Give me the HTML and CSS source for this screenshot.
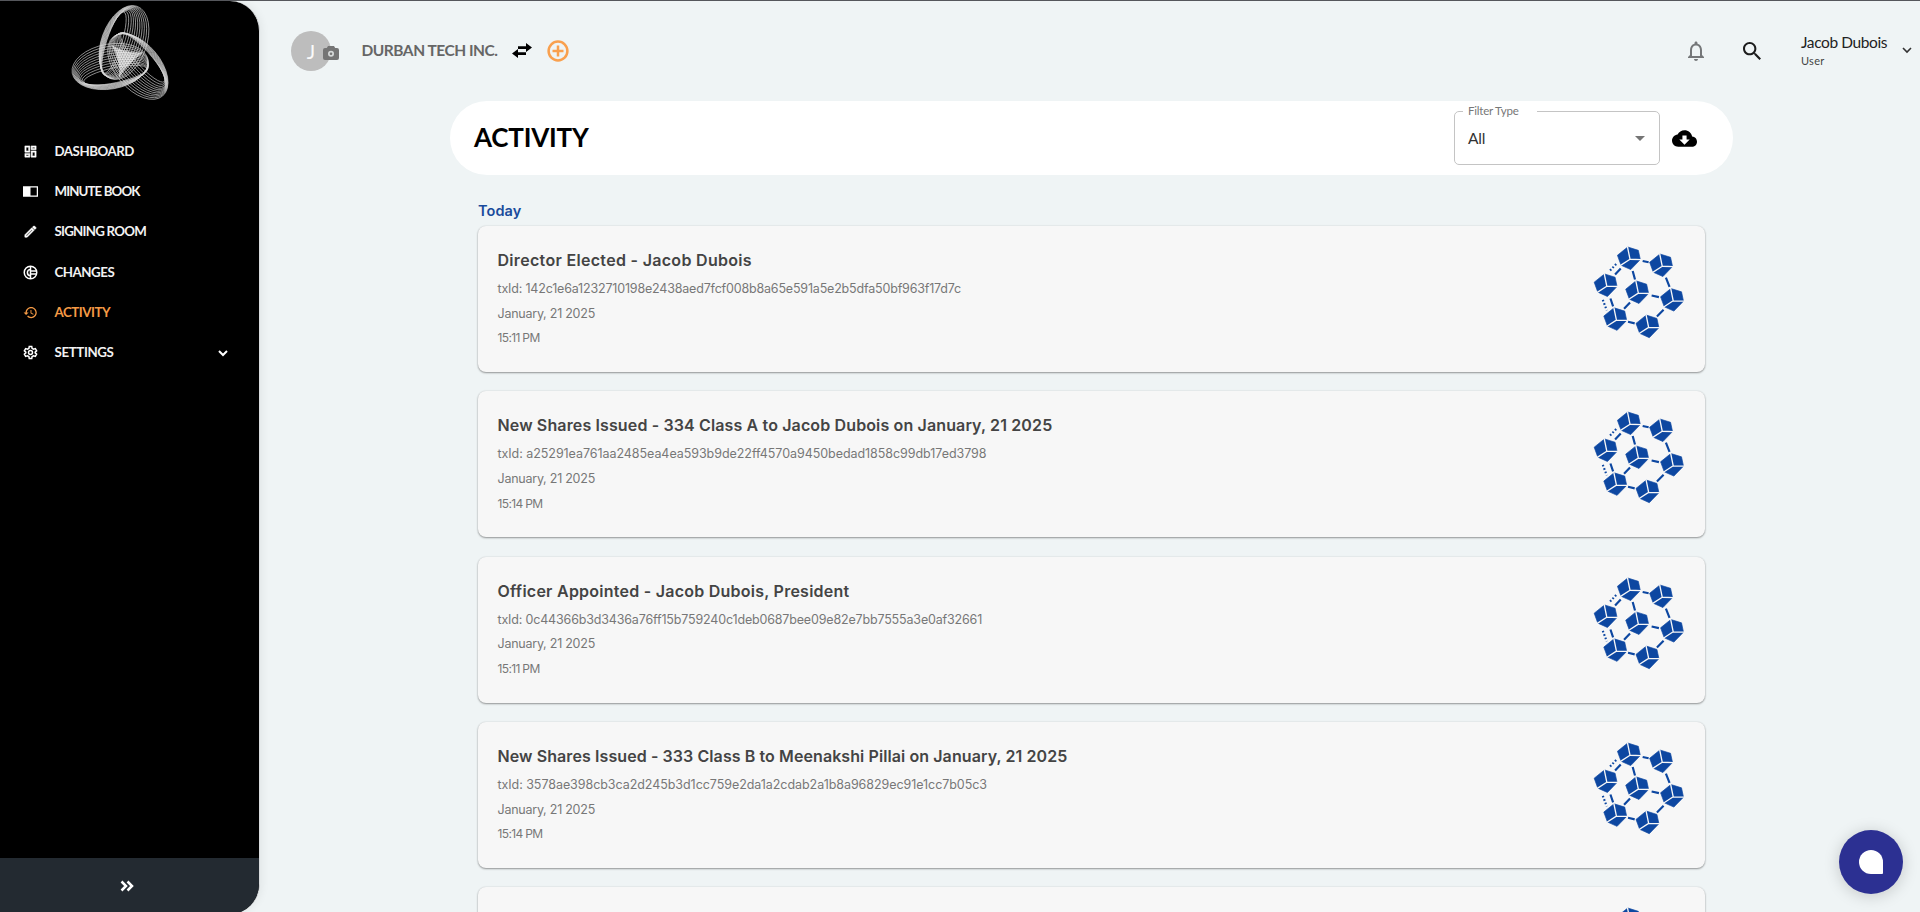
FILE: index.html
```html
<!DOCTYPE html>
<html lang="en">
<head>
<meta charset="utf-8">
<title>Activity</title>
<link rel="stylesheet" href="styles.css">
</head>
<body>
<svg class="defs" aria-hidden="true">
  <symbol id="chain" viewBox="100 78 272 280">
    <g stroke="#0d47a1" stroke-width="6.500" fill="none">
      <path d="M247 123l18 4M317 173l11 28M181 146l-17 18M217 153l7 26M150 236l8 24M209 248l-18 19M274 227l22 5M203 306l20 5M310 270l-20 20"/>
      <path d="M149 152l22-24M127 240l12 32" stroke-dasharray="5 6"/>
    </g>
    <g id="cubes">
      <use href="#cube" x="206" y="115"/><use href="#cube" x="303" y="136"/>
      <use href="#cube" x="136" y="196"/><use href="#cube" x="231" y="217"/>
      <use href="#cube" x="336" y="240"/><use href="#cube" x="165" y="298"/>
      <use href="#cube" x="262" y="320"/>
    </g>
  </symbol>
  <g id="cube">
    <path d="M-4-34L28-24L34 4L5 34L-24 21L-35-9Z" fill="#0d47a1" stroke="#0d47a1" stroke-width="2"/>
    <path d="M3 3L-5-36M3 3L37 4M3 3L-28 23" stroke="#f7f7f7" stroke-width="4" fill="none"/>
  </g>
</svg>
<div class="app">
  <aside class="sidebar">
    <svg class="logo" viewBox="0 0 260 120">
      <defs>
        <g id="lobe">
          <ellipse cx="122" cy="41" rx="22.5" ry="38.5" transform="rotate(20 122 41)"/>
          <ellipse cx="121" cy="41" rx="21" ry="38" transform="rotate(20 121 41)"/>
          <ellipse cx="120" cy="41" rx="19.5" ry="37.5" transform="rotate(20 120 41)"/>
          <ellipse cx="119" cy="41" rx="18" ry="37" transform="rotate(20 119 41)"/>
          <ellipse cx="118" cy="41" rx="16.5" ry="36.5" transform="rotate(20 118 41)"/>
          <ellipse cx="117" cy="41" rx="15" ry="36" transform="rotate(20 117 41)"/>
          <ellipse cx="116" cy="41" rx="13.5" ry="35.5" transform="rotate(20 116 41)"/>
          <ellipse cx="115" cy="41" rx="12" ry="35" transform="rotate(20 115 41)"/>
          <ellipse cx="114" cy="41" rx="10.5" ry="34" transform="rotate(20 114 41)"/>
          <ellipse cx="113" cy="41" rx="9" ry="33" transform="rotate(19 113 41)"/>
          <ellipse cx="112" cy="41" rx="7.5" ry="32" transform="rotate(18 112 41)"/>
        </g>
      </defs>
      <g transform="translate(2 1.500)">
        <path d="M109 43Q122 52 141 51Q127 61 117 76Q119 58 109 43Z" fill="#fff" opacity=".6"/>
        <g fill="none" stroke="#fff" stroke-width=".6" opacity=".85">
          <use href="#lobe"/>
          <use href="#lobe" transform="rotate(120 122 57)"/>
          <use href="#lobe" transform="rotate(240 122 57)"/>
        </g>
      </g>
    </svg>
    <nav class="nav">
      <a class="nav-item"><svg viewBox="0 0 24 24"><path stroke="#fff" stroke-width=".8" d="M19 5v2h-4V5h4M9 5v6H5V5h4m10 8v6h-4v-6h4M9 17v2H5v-2h4M21 3h-8v6h8V3zM11 3H3v10h8V3zm10 8h-8v10h8V11zm-10 4H3v6h8v-6z"/></svg><span>DASHBOARD</span></a>
      <a class="nav-item"><svg viewBox="0 0 24 24"><path d="M0 3.500h12v17H0zM12 3.500h12v17H12V18.500h10v-13H12z"/></svg><span>MINUTE BOOK</span></a>
      <a class="nav-item"><svg viewBox="0 0 24 24"><path d="M14.06 9.02l.92.92L5.92 19H5v-.92l9.06-9.06M17.66 3c-.25 0-.51.1-.7.29l-1.83 1.83 3.75 3.75 1.83-1.83c.39-.39.39-1.02 0-1.41l-2.34-2.34c-.2-.2-.45-.29-.71-.29zm-3.6 3.19L3 17.25V21h3.75L17.81 9.94l-3.75-3.75z" stroke="#fff" stroke-width="1"/></svg><span>SIGNING ROOM</span></a>
      <a class="nav-item"><svg viewBox="0 0 24 24"><g fill="none" stroke="#fff" stroke-width="2.400"><circle cx="12" cy="12" r="10"/><path d="M12 7a5 5 0 1 0 0 10M12 2v7.500h10M12 22v-7.500h10M12 9.500v5"/></g></svg><span>CHANGES</span></a>
      <a class="nav-item active"><svg viewBox="0 0 24 24"><path d="M13 3c-4.97 0-9 4.03-9 9H1l3.89 3.89.07.14L9 12H6c0-3.87 3.13-7 7-7s7 3.13 7 7-3.13 7-7 7c-1.93 0-3.68-.79-4.94-2.06l-1.42 1.42C8.27 19.99 10.51 21 13 21c4.97 0 9-4.03 9-9s-4.03-9-9-9zm-1 5v5l4.28 2.54.72-1.21-3.5-2.08V8H12z"/></svg><span>ACTIVITY</span></a>
      <a class="nav-item"><svg viewBox="0 0 24 24"><g fill="none" stroke="#fff" stroke-width="2.400"><path d="M10 2.500h4l.6 3 2.300 1.300 2.900-1 2 3.500-2.300 2v1.400l2.300 2-2 3.500-2.900-1-2.300 1.300-.6 3h-4l-.6-3-2.300-1.300-2.900 1-2-3.500 2.300-2v-1.400l-2.300-2 2-3.500 2.900 1 2.300-1.300z"/><circle cx="12" cy="12" r="3.200"/></g></svg><span>SETTINGS</span><svg class="caret" viewBox="0 0 12 12"><path d="M2 4l4 4 4-4" fill="none" stroke="#fff" stroke-width="2"/></svg></a>
    </nav>
    <div class="collapse"><svg viewBox="0 0 14 12"><path d="M1.500 1.500L6 6l-4.500 4.500M7.500 1.500L12 6l-4.500 4.500" fill="none" stroke="#fff" stroke-width="2.500"/></svg></div>
  </aside>
  <div class="page">
    <header class="topbar">
      <div class="avatar">J<svg class="camera" viewBox="0 0 16 14"><path d="M5 0h6l1.200 2H14a2 2 0 0 1 2 2v8a2 2 0 0 1-2 2H2a2 2 0 0 1-2-2V4a2 2 0 0 1 2-2h1.800z" fill="#757575"/><circle cx="8" cy="7.700" r="3" fill="#d6d9d9"/><circle cx="8" cy="7.700" r="1.300" fill="#757575"/></svg></div>
      <span class="company">DURBAN TECH INC.</span>
      <svg class="swap" viewBox="0 0 20 15"><path d="M14 0l6 4.500-6 4.500V6H6V3.200h8zM6 6l-6 4.500L6 15v-3h8V9.200H6z"/></svg>
      <svg class="plus" viewBox="0 0 22 22"><circle cx="11" cy="11" r="9.400"/><path d="M11 5.500v11M5.500 11h11"/></svg>
      <div class="tools">
        <svg class="bell" viewBox="4 2 16 20"><path d="M12 22c1.100 0 2-.9 2-2h-4c0 1.100.9 2 2 2zm6-6v-5c0-3.070-1.630-5.640-4.500-6.320V4c0-.83-.67-1.500-1.500-1.500s-1.500.67-1.500 1.500v.68C7.640 5.360 6 7.920 6 11v5l-2 2v1h16v-1l-2-2zm-2 1H8v-6c0-2.480 1.510-4.500 4-4.500s4 2.020 4 4.500v6z"/></svg>
        <svg class="search" viewBox="3 3 17.500 17.500"><path d="M15.500 14h-.79l-.28-.27C15.410 12.590 16 11.110 16 9.500 16 5.910 13.090 3 9.500 3S3 5.910 3 9.500 5.910 16 9.500 16c1.610 0 3.090-.59 4.230-1.570l.27.28v.79l5 4.990L20.490 19l-4.990-5zm-6 0C7.010 14 5 11.990 5 9.500S7.010 5 9.500 5 14 7.010 14 9.500 11.990 14 9.500 14z"/></svg>
        <div class="user"><div class="user-name">Jacob Dubois</div><div class="user-role">User</div></div>
        <svg class="chev" viewBox="0 0 10 7"><path d="M1 1l4 4 4-4"/></svg>
      </div>
    </header>
    <main class="content">
      <section class="titlebar">
        <h1>ACTIVITY</h1>
        <fieldset class="select"><legend>Filter Type</legend><span class="value">All</span><svg viewBox="0 0 10 5"><path d="M0 0h10L5 5z"/></svg></fieldset>
        <svg class="cloud" viewBox="0 4 24 16"><path d="M19.350 10.040C18.670 6.590 15.640 4 12 4 9.110 4 6.600 5.640 5.350 8.040 2.340 8.360 0 10.910 0 14c0 3.310 2.690 6 6 6h13c2.760 0 5-2.240 5-5 0-2.640-2.050-4.780-4.650-4.960zM17 13l-5 5-5-5h3V9h4v4h3z"/></svg>
      </section>
      <h2 class="day">Today</h2>
      <div class="list">
        <article class="card"><div><h3>Director Elected - Jacob Dubois</h3><p class="tx">txId: 142c1e6a1232710198e2438aed7fcf008b8a65e591a5e2b5dfa50bf963f17d7c</p><p>January, 21 2025</p><p class="time">15:11 PM</p></div><svg class="chain"><use href="#chain"/></svg></article>
        <article class="card"><div><h3>New Shares Issued - 334 Class A to Jacob Dubois on January, 21 2025</h3><p class="tx">txId: a25291ea761aa2485ea4ea593b9de22ff4570a9450bedad1858c99db17ed3798</p><p>January, 21 2025</p><p class="time">15:14 PM</p></div><svg class="chain"><use href="#chain"/></svg></article>
        <article class="card"><div><h3>Officer Appointed - Jacob Dubois, President</h3><p class="tx">txId: 0c44366b3d3436a76ff15b759240c1deb0687bee09e82e7bb7555a3e0af32661</p><p>January, 21 2025</p><p class="time">15:11 PM</p></div><svg class="chain"><use href="#chain"/></svg></article>
        <article class="card"><div><h3>New Shares Issued - 333 Class B to Meenakshi Pillai on January, 21 2025</h3><p class="tx">txId: 3578ae398cb3ca2d245b3d1cc759e2da1a2cdab2a1b8a96829ec91e1cc7b05c3</p><p>January, 21 2025</p><p class="time">15:14 PM</p></div><svg class="chain"><use href="#chain"/></svg></article>
        <article class="card"><div></div><svg class="chain"><use href="#chain"/></svg></article>
      </div>
    </main>
  </div>
  <button class="chat"><span></span></button>
</div>
</body>
</html>
```
FILE: styles.css
```css
* { box-sizing: border-box; }
body {
  margin: 0;
  height: 912px;
  overflow: hidden;
  background: #eff4f5;
  border-top: 1px solid #55575c;
  font-family: Lato, "Noto Sans", sans-serif;
}
h1, h2, h3, p { margin: 0; }
.defs { position: absolute; width: 0; height: 0; }
.app { display: flex; height: 911px; overflow: hidden; }

.sidebar {
  flex: none;
  display: flex;
  flex-direction: column;
  width: 260px;
  height: 913px;
  overflow: hidden;
  background: #000;
  border-right: 1px solid #d9dcde;
  border-radius: 0 30px 30px 0;
  box-shadow: 2px 0 8px rgba(0, 0, 0, .06);
}
.logo { flex: none; width: 260px; height: 120px; margin-top: -1px; }
.nav { flex: 1; padding-top: 11.500px; }
.nav-item {
  display: flex;
  align-items: center;
  height: 40.2px;
  padding: 0 30px 0 23px;
  color: #f2f2f2;
  font-size: 13.300px;
  font-weight: 700;
  letter-spacing: -.48px;
}
.nav-item:nth-child(2) { letter-spacing: -.9px; }
.nav-item:nth-child(3) { letter-spacing: -.77px; }
.nav-item:nth-child(6) { letter-spacing: -.38px; }
.nav-item span { margin-top: -1px; }
.nav-item svg { width: 15px; height: 15px; margin-right: 16.500px; fill: #fff; }
.nav-item.active { color: #f59a45; }
.nav-item.active svg { fill: #f59a45; }
.nav-item .caret { width: 12px; height: 12px; margin: 0 0 0 auto; }
.collapse {
  display: flex;
  justify-content: center;
  height: 56px;
  padding: 22px 6px 0 0;
  background: #232a31;
}
.collapse svg { width: 14px; height: 12px; }

.page { flex: 1; min-width: 0; }
.topbar { display: flex; align-items: center; height: 100px; padding-left: 31px; }
.avatar {
  position: relative;
  width: 40px;
  height: 40px;
  border-radius: 50%;
  background: #bdbdbd;
  color: #fafafa;
  font-size: 20px;
  line-height: 40px;
  text-align: center;
}
.camera { position: absolute; left: 32px; top: 15px; width: 16px; height: 14px; }
.company {
  width: 136px;
  margin: -2px 0 0 30.500px;
  color: #666;
  font-size: 15.500px;
  font-weight: 700;
  letter-spacing: -.48px;
  white-space: nowrap;
}
.swap { width: 20px; height: 15px; margin: -1px 0 0 14.500px; }
.plus { width: 22px; height: 22px; margin: -1px 0 0 14.500px; fill: none; stroke: #f9a04e; stroke-width: 2.500; }
.tools { display: flex; align-items: center; margin: -1px 0 0 auto; padding-right: 8px; }
.bell { width: 16px; height: 20px; fill: #757779; }
.search { width: 18px; height: 18px; margin-left: 39px; fill: #1c1c1c; }
.user { width: 101px; margin-left: 40px; white-space: nowrap; color: #222; }
.user-name { font-size: 15.500px; line-height: 20px; letter-spacing: -.4px; }
.user-role { font-size: 11px; line-height: 18px; letter-spacing: .27px; color: #444; }
.chev { width: 10px; height: 7px; fill: none; stroke: #333; stroke-width: 1.600; }

.content { width: 1283px; margin-left: 190px; }
.titlebar { display: flex; height: 74px; padding: 0 36px 0 24px; background: #fff; border-radius: 37px; }
h1 { flex: 1; color: #000; font-size: 26px; font-weight: 700; line-height: 73px; letter-spacing: -.2px; }
.select {
  display: flex;
  align-items: center;
  justify-content: space-between;
  width: 206px;
  height: 59px;
  margin: 5px 0 0;
  padding: 0 14px 5px 13px;
  border: 1px solid #c4c4c4;
  border-radius: 5px;
}
.select legend {
  width: 74px;
  height: 11px;
  margin-left: -5px;
  padding: 0 5px;
  color: #777;
  font-size: 11.500px;
  line-height: 9px;
  letter-spacing: -.22px;
}
.value { color: #333; font-size: 15.500px; letter-spacing: -.2px; }
.select svg { width: 10px; height: 5px; fill: #757575; }
.cloud { width: 25px; height: 17px; margin: 28.500px 0 0 12px; }

.day {
  height: 51px;
  padding: 24px 0 0 28px;
  color: #1a4b9c;
  font: 600 14.500px/24px Inter, sans-serif;
  letter-spacing: .1px;
}
.list { display: flex; flex-direction: column; gap: 19.300px; padding: 0 28px 0 27.500px; }
.card {
  display: flex;
  justify-content: space-between;
  flex: none;
  height: 146px;
  padding: 20px 20px 0 20px;
  background: #f7f7f7;
  border-radius: 8px;
  box-shadow: 0 1px 2px rgba(0, 0, 0, .38), 0 0 2px rgba(0, 0, 0, .1);
  font-family: Inter, sans-serif;
  white-space: nowrap;
}
.card h3 { margin-top: 2px; color: #444; font-size: 16px; font-weight: 600; line-height: 25px; letter-spacing: .31px; }
.card:nth-child(2) h3 { letter-spacing: .133px; }
.card:nth-child(3) h3 { letter-spacing: .247px; }
.card:nth-child(4) h3 { letter-spacing: .089px; }
.card p { color: #777; font-size: 12.500px; line-height: 24.700px; letter-spacing: -.244px; }
.card .tx { margin-top: 4px; letter-spacing: -.184px; }
.card:nth-child(2) .tx { letter-spacing: -.053px; }
.card:nth-child(3) .tx { letter-spacing: -.169px; }
.card:nth-child(4) .tx { letter-spacing: -.057px; }
.card .time { font-size: 12px; letter-spacing: -.65px; }
.chain { width: 92px; height: 93px; }

.chat {
  position: fixed;
  right: 17px;
  bottom: 18px;
  display: grid;
  place-items: center;
  width: 64px;
  height: 64px;
  border: 0;
  border-radius: 50%;
  background: #2c3092;
  box-shadow: 0 2px 16px rgba(0, 0, 0, .18);
}
.chat span { width: 24px; height: 24px; border-radius: 50% 50% 1px 50%; background: #fff; }
```
